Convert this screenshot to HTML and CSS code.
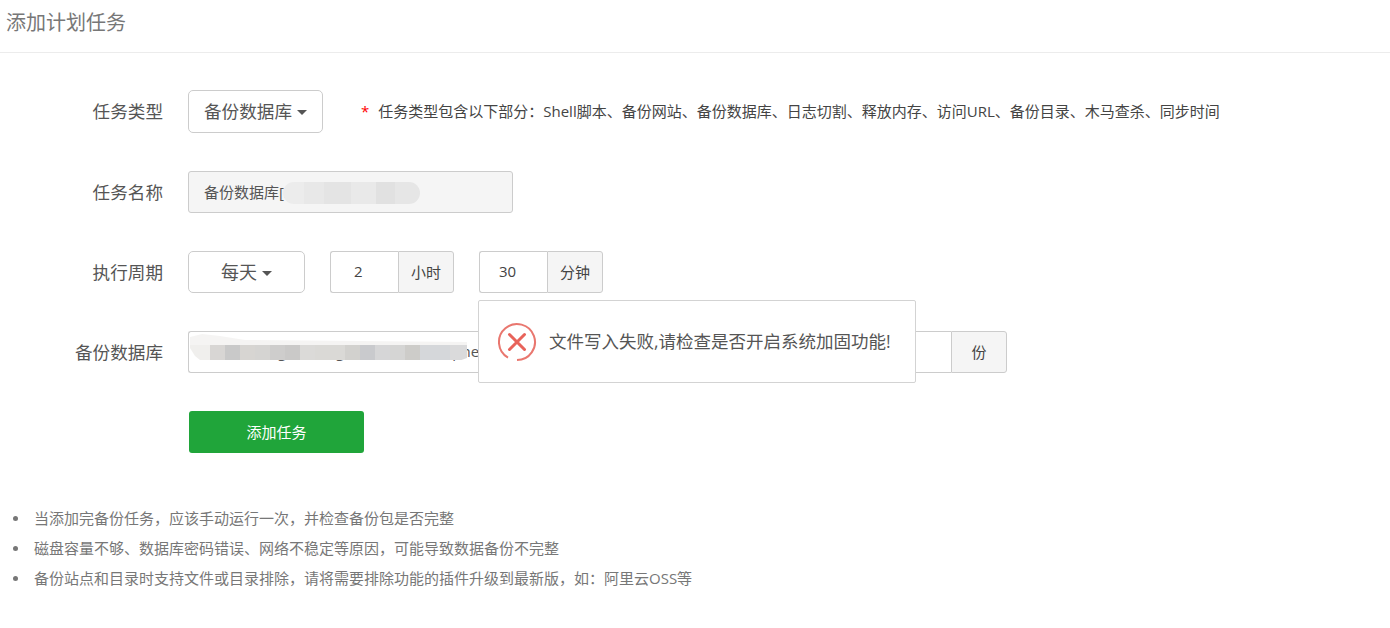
FILE: index.html
```html
<!DOCTYPE html>
<html lang="zh-CN">
<head>
<meta charset="utf-8">
<title>添加计划任务</title>
<link rel="stylesheet" href="styles.css">
</head>
<body>
<header class="page-head">添加计划任务</header>
<main class="form">
  <div class="row">
    <div class="label">任务类型</div>
    <div class="drop drop-type">备份数据库<span class="caret"></span></div>
    <div class="tip"><span class="star">*</span>任务类型包含以下部分：Shell脚本、备份网站、备份数据库、日志切割、释放内存、访问URL、备份目录、木马查杀、同步时间</div>
  </div>
  <div class="row">
    <div class="label">任务名称</div>
    <div class="field field-name">备份数据库[zzzzzzzzzz_aaaaag]<span class="blur blur-name"></span></div>
  </div>
  <div class="row">
    <div class="label">执行周期</div>
    <div class="drop drop-cycle">每天<span class="caret"></span></div>
    <div class="group group-hour"><div class="num">2</div><div class="addon addon-time">小时</div></div>
    <div class="group group-min"><div class="num">30</div><div class="addon addon-time">分钟</div></div>
  </div>
  <div class="row">
    <div class="label">备份数据库</div>
    <div class="group group-db">
      <div class="db-input">zaaaaaaaagaaaaaagaaaaaaaaaaaaapheee<span class="blur blur-db"></span></div>
      <div class="addon addon-db">份</div>
    </div>
  </div>
  <div class="row">
    <div class="label"></div>
    <button class="submit" type="button">添加任务</button>
  </div>
</main>
<ul class="notes">
  <li>当添加完备份任务，应该手动运行一次，并检查备份包是否完整</li>
  <li>磁盘容量不够、数据库密码错误、网络不稳定等原因，可能导致数据备份不完整</li>
  <li>备份站点和目录时支持文件或目录排除，请将需要排除功能的插件升级到最新版，如：阿里云OSS等</li>
</ul>
<div class="toast">
  <svg class="toast-icon" width="40" height="40" viewBox="0 0 40 40" aria-hidden="true">
    <path d="M11 35.6A18 18 0 1 1 20 38" fill="none" stroke="#e9776f" stroke-width="2"/>
    <path d="M12.5 12.5L27.5 27.5M27.5 12.5L12.5 27.5" fill="none" stroke="#e8635a" stroke-width="3" stroke-linecap="round"/>
  </svg>
  <span class="toast-text">文件写入失败,请检查是否开启系统加固功能!</span>
</div>
</body>
</html>
```
FILE: styles.css
```css
* { box-sizing: border-box; }
html, body { margin: 0; padding: 0; }
body {
  position: relative;
  height: 628px;
  overflow: hidden;
  background: #fff;
  color: #555;
  font-family: "Open Sans", "Noto Sans CJK SC", sans-serif;
  font-size: 15px;
}
.page-head {
  height: 53px;
  padding: 7px 0 0 6px;
  border-bottom: 1px solid #ececec;
  color: #777;
  font-size: 20px;
  line-height: 32px;
}
.form {
  display: flex;
  flex-direction: column;
  gap: 38px;
  padding-top: 37px;
}
.row {
  display: flex;
  align-items: center;
  height: 42px;
}
.row:first-child { height: 43px; }
.label {
  width: 163px;
  margin-right: 25px;
  padding-bottom: 2px;
  flex: none;
  text-align: right;
  font-size: 17.6px;
}
.drop {
  display: flex;
  align-items: center;
  justify-content: center;
  height: 100%;
  padding-bottom: 2px;
  border: 1px solid #ccc;
  border-radius: 5px;
  font-size: 17.6px;
}
.drop-type { width: 135px; }
.drop-cycle { width: 117px; margin-right: 25px; font-size: 18px; }
.caret {
  width: 0;
  height: 0;
  margin-left: 5px;
  margin-top: 4px;
  border-top: 5px solid #555;
  border-left: 5px solid transparent;
  border-right: 5px solid transparent;
}
.tip {
  margin-left: 38px;
  padding-bottom: 2px;
  font-size: 15px;
  color: #444;
  white-space: nowrap;
}
.star {
  color: #f00;
  margin-right: 9px;
}
.field {
  position: relative;
  display: flex;
  align-items: center;
  width: 325px;
  height: 100%;
  padding: 0 0 2px 15px;
  background: #f5f5f5;
  border: 1px solid #ccc;
  border-radius: 3px;
  white-space: nowrap;
  overflow: hidden;
}
.group {
  display: flex;
  height: 100%;
}
.group-hour { margin-right: 25px; }
.num {
  width: 68px;
  border: 1px solid #ccc;
  border-right: 0;
  border-radius: 3px 0 0 3px;
  padding-left: 23px;
  line-height: 38px;
  color: #444;
}
.group-min .num { padding-left: 19px; }
.addon {
  display: flex;
  align-items: center;
  justify-content: center;
  padding-bottom: 2px;
  background: #f5f5f5;
  border: 1px solid #ccc;
  border-radius: 0 3px 3px 0;
  color: #444;
}
.addon-time { width: 56px; }
.db-input {
  position: relative;
  width: 763px;
  padding-left: 15px;
  border: 1px solid #ccc;
  border-right: 0;
  border-radius: 3px 0 0 3px;
  line-height: 38px;
  white-space: nowrap;
  overflow: hidden;
}
.addon-db { width: 56px; }
.blur {
  position: absolute;
  display: block;
}
.blur-name {
  left: 94px;
  top: 10px;
  width: 137px;
  height: 22px;
  border-radius: 11px;
  background: linear-gradient(90deg, #ececec 0 15%, #e8e8e8 15% 30%, #e4e4e4 30% 50%, #e9e9e9 50% 68%, #e1e1e1 68% 82%, #e6e6e6 82% 100%);
}
.blur-db {
  left: 1px;
  top: 2px;
  width: 277px;
  height: 26px;
  clip-path: polygon(0 3px, 12px 0, 30px 2px, 55px 6px, 100% 8px, 100% 24px, 98% 26px, 10px 26px, 5px 22px, 0 14px);
  background:
    linear-gradient(90deg, #f0efed 0 20px, #d8d6d4 20px 35px, #c9c9c9 35px 50px, #d7d5d2 50px 65px, #d5d4d2 65px 80px, #cecdcc 80px 95px, #cac9c8 95px 110px, #dbdad8 110px 125px, #dad9d6 125px 155px, #d2d1ce 155px 170px, #c9cacd 170px 185px, #d6d6d7 185px 200px, #d5d5d4 200px 215px, #cdccc9 215px 230px, #d5d7da 230px 260px, #dadadb 260px 277px) 0 11px / 100% 15px no-repeat,
    linear-gradient(#f5f4f3, #f5f4f3) 0 0 / 100% 11px no-repeat;
}
.submit {
  width: 175px;
  height: 100%;
  margin-left: 1px;
  padding: 0 0 2px;
  border: 0;
  border-radius: 3px;
  background: #20a53a;
  color: #fff;
  font: inherit;
}
.notes {
  margin: 50px 0 0;
  padding: 0 0 0 13px;
  list-style: none;
  color: #777;
  line-height: 30px;
}
.notes li {
  display: flex;
  align-items: center;
}
.notes li::before {
  content: "";
  flex: none;
  width: 5px;
  height: 5px;
  margin-right: 16px;
  border-radius: 50%;
  background: #777;
}
.toast {
  position: absolute;
  left: 478px;
  top: 300px;
  display: flex;
  align-items: center;
  width: 438px;
  height: 83px;
  padding-left: 18px;
  background: #fff;
  border: 1px solid #d3d3d3;
  border-radius: 2px;
  font-size: 17.5px;
}
.toast-icon {
  flex: none;
  margin-right: 12px;
}
.toast-text { padding-bottom: 2px; }
```
